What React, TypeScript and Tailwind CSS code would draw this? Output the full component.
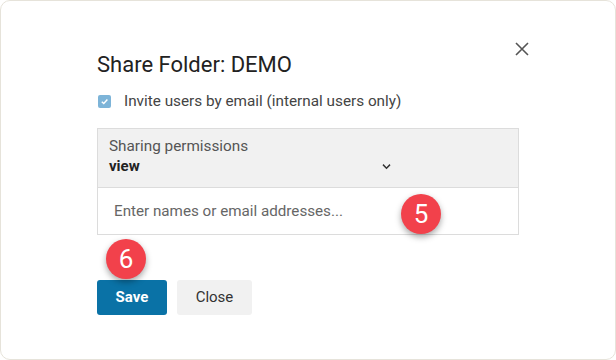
import { useState, ChangeEvent } from 'react';

// Small red step marker drawn over the dialog
function StepBadge({ n, className }: { n: number; className: string }) {
  return (
    <div
      className={`absolute flex h-[40px] w-[40px] items-center justify-center rounded-full bg-[#f2414b] text-[26px] text-white shadow-[0_3px_6px_rgba(0,0,0,0.35)] ${className}`}
    >
      {n}
    </div>
  );
}

function App() {
  const [invite, setInvite] = useState<boolean>(true);
  const [emails, setEmails] = useState<string>('');

  const handleEmails = (e: ChangeEvent<HTMLInputElement>): void => {
    setEmails(e.target.value);
  };

  return (
    <div
      className="relative h-[360px] w-[616px] rounded-[10px] border border-[#e6e3da] bg-white"
      style={{ fontFamily: 'Roboto, "Liberation Sans", sans-serif' }}
    >
      <div className="ml-[96px] flex w-[422px] flex-col pt-[50px]">
        {/* Header */}
        <div className="-mr-[11px] flex items-start justify-between">
          <h1 className="text-[22px] leading-[27px] text-[#222]">Share Folder: DEMO</h1>
          <button className="-mt-[10px] text-[#555]" aria-label="Close">
            <svg width="16" height="16" viewBox="0 0 16 16" fill="none" stroke="currentColor" strokeWidth="1.6">
              <path d="M2 2 L14 14 M14 2 L2 14" />
            </svg>
          </button>
        </div>

        {/* Invite checkbox */}
        <label className="mt-[11px] flex items-center gap-[13px] text-[15.3px] leading-[24px] text-[#444]">
          <span
            onClick={() => setInvite(!invite)}
            className="ml-[1px] flex h-[13px] w-[13px] items-center justify-center rounded-[2px] bg-[#7db4d8]"
          >
            {invite && (
              <svg width="9" height="9" viewBox="0 0 10 10" fill="none" stroke="white" strokeWidth="1.6">
                <path d="M2 5.2 L4.2 7.3 L8.2 2.8" />
              </svg>
            )}
          </span>
          Invite users by email (internal users only)
        </label>

        {/* Permissions select + input */}
        <div className="mt-[15px] flex flex-col border border-[#dcdcdc]">
          <div className="flex flex-col bg-[#f1f1f1] px-[11px] pb-[10px] pt-[8px]">
            <span className="text-[15.3px] leading-[18px] text-[#555]">Sharing permissions</span>
            <div className="flex w-[283px] items-center justify-between">
              <span className="text-[15px] font-bold leading-[22px] text-[#222]">view</span>
              <svg width="11" height="11" viewBox="0 0 10 10" fill="none" stroke="#333" strokeWidth="1.3">
                <path d="M1.8 3.3 L5 6.5 L8.2 3.3" />
              </svg>
            </div>
          </div>
          <input
            value={emails}
            onChange={handleEmails}
            placeholder="Enter names or email addresses..."
            className="h-[47px] border-t border-[#dcdcdc] bg-white px-[16px] text-[15.2px] text-[#333] placeholder-[#666] outline-none"
          />
        </div>

        {/* Actions */}
        <div className="mt-[45px] flex gap-[10px]">
          <button className="h-[35px] w-[70px] rounded-[3px] bg-[#0a72a6] text-[15px] font-bold text-white">
            Save
          </button>
          <button className="h-[35px] w-[75px] rounded-[3px] bg-[#f1f1f1] text-[15px] text-[#333]">
            Close
          </button>
        </div>
      </div>

      <StepBadge n={5} className="left-[400px] top-[193px]" />
      <StepBadge n={6} className="left-[105px] top-[238px]" />
    </div>
  );
}

export default App;
